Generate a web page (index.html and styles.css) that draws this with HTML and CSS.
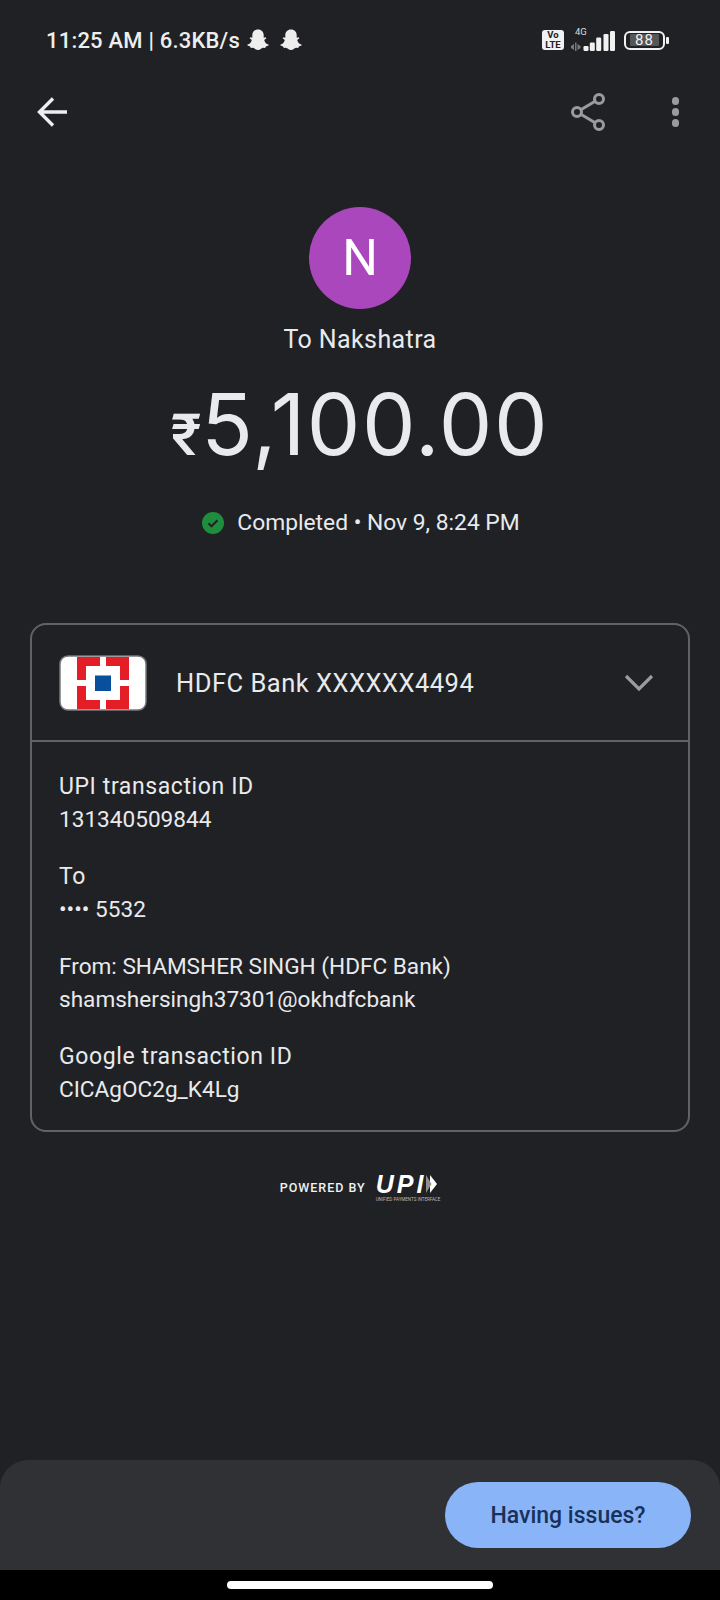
FILE: index.html
```html
<!DOCTYPE html>
<html lang="en">
<head>
<meta charset="UTF-8">
<meta name="viewport" content="width=device-width, initial-scale=1.0">
<title>Transaction details</title>
<link rel="stylesheet" href="styles.css">
</head>
<body>
<div id="page">
  <div class="status-bar">
    <div class="status-left">
      <span class="clock">11:25 AM | 6.3KB/s</span>
      <svg class="ghost" viewBox="0 0 24 24"><path d="M12 1.500c3.600 0 5.700 2.600 5.700 5.700v2.600l1.900-.5.8 1-2.200 1.600c.5 2.300 2 3.900 4.300 4.700v1l-2.700.8-.5 1.500-2.300-.1c-1.600.3-2.800 2.200-5 2.200s-3.400-1.900-5-2.200l-2.300.1-.5-1.500-2.700-.8v-1c2.300-.8 3.800-2.400 4.300-4.700L3.600 10.300l.8-1 1.900.5V7.200c0-3.100 2.100-5.700 5.700-5.700z"/></svg>
      <svg class="ghost second" viewBox="0 0 24 24"><path d="M12 1.500c3.600 0 5.700 2.600 5.700 5.700v2.600l1.900-.5.8 1-2.200 1.600c.5 2.300 2 3.900 4.300 4.700v1l-2.700.8-.5 1.500-2.300-.1c-1.600.3-2.800 2.200-5 2.200s-3.400-1.900-5-2.200l-2.300.1-.5-1.500-2.700-.8v-1c2.300-.8 3.800-2.400 4.300-4.700L3.600 10.300l.8-1 1.900.5V7.200c0-3.100 2.100-5.700 5.700-5.700z"/></svg>
    </div>
    <div class="status-right">
      <div class="volte">Vo<br>LTE</div>
      <div class="signal">
        <span class="net">4G</span>
        <svg width="46" height="22" viewBox="0 0 46 22">
          <path d="M0 17l3-2v6l-3-2zM4 13.500h1.500V22H4zM6.500 15l3 2v2l-3 2z" fill="#77797b"/>
          <rect x="12.500" y="17" width="5" height="5" rx="1.200" fill="#f1f1f1"/>
          <rect x="18.800" y="13.500" width="5" height="8.500" rx="1.200" fill="#f1f1f1"/>
          <rect x="25.200" y="8.500" width="5" height="13.500" rx="1.200" fill="#f1f1f1"/>
          <rect x="32.500" y="5" width="5" height="17" rx="1.200" fill="#f1f1f1"/>
          <rect x="39" y="2" width="5" height="20" rx="1.200" fill="#f1f1f1"/>
        </svg>
      </div>
      <div class="battery"><span class="level">88</span></div>
      <div class="battery-tip"></div>
    </div>
  </div>

  <div class="toolbar">
    <svg class="back" width="34" height="32" viewBox="0 0 34 32"><path d="M32 16H5M18 2.500L4.500 16 18 29.500" fill="none" stroke="#eceef0" stroke-width="3.400"/></svg>
    <div class="toolbar-actions">
      <svg width="36" height="40" viewBox="0 0 36 40"><path d="M28 7L6 20l22 13" fill="none" stroke="#9a9b9d" stroke-width="3"/><circle cx="28" cy="7" r="4.500" fill="#202124" stroke="#9a9b9d" stroke-width="3"/><circle cx="6" cy="20" r="4.500" fill="#202124" stroke="#9a9b9d" stroke-width="3"/><circle cx="28" cy="33" r="4.500" fill="#202124" stroke="#9a9b9d" stroke-width="3"/></svg>
      <div class="dots"><i></i><i></i><i></i></div>
    </div>
  </div>

  <div class="summary">
    <div class="avatar">N</div>
    <div class="payee">To Nakshatra</div>
    <div class="amount"><span class="rupee">₹</span>5,100.00</div>
    <div class="state">
      <svg width="22" height="22" viewBox="0 0 22 22"><circle cx="11" cy="11" r="11" fill="#1e8e3e"/><path d="M6.500 11.300l3 3 6-6" fill="none" stroke="#202124" stroke-width="2"/></svg>
      <span>Completed • Nov 9, 8:24 PM</span>
    </div>
  </div>

  <div class="card">
    <div class="card-head">
      <svg class="bank-logo" width="88" height="56" viewBox="0 0 88 56">
        <rect x="1" y="1" width="86" height="54" rx="8" fill="#fff" stroke="#77797b" stroke-width="1.500"/>
        <path d="M18 2h23v9H27v14h-9zM47 2h23v23h-9V11H47zM18 31h9v14h14v9H18zM61 31h9v23H47v-9h14z" fill="#e31e26"/>
        <rect x="36" y="20.500" width="16" height="15.500" fill="#084f9c"/>
      </svg>
      <div class="bank-name">HDFC Bank XXXXXX4494</div>
      <svg class="chevron" width="30" height="18" viewBox="0 0 30 18"><path d="M2 2l13 13L28 2" fill="none" stroke="#9a9b9d" stroke-width="3.200"/></svg>
    </div>
    <div class="card-body">
      <div class="detail"><div class="label">UPI transaction ID</div><div>131340509844</div></div>
      <div class="detail"><div class="label">To</div><div>•••• 5532</div></div>
      <div class="detail"><div>From: SHAMSHER SINGH (HDFC Bank)</div><div>shamshersingh37301@okhdfcbank</div></div>
      <div class="detail"><div class="label">Google transaction ID</div><div>CICAgOC2g_K4Lg</div></div>
    </div>
  </div>

  <div class="powered">
    <span class="powered-by">POWERED BY</span>
    <div class="upi">
      <div class="upi-mark">
        <span class="upi-word">UPI</span>
        <svg width="11" height="18" viewBox="0 0 11 18"><path d="M4 0l7 9-7 9z" fill="#fff"/><path d="M0 0l5.500 9L0 18z" fill="#8d8e90"/></svg>
      </div>
      <div class="upi-sub">UNIFIED PAYMENTS INTERFACE</div>
    </div>
  </div>

  <div class="sheet">
    <button class="issues">Having issues?</button>
  </div>
  <div class="nav-bar"><div class="home-pill"></div></div>
</div>
</body>
</html>
```

FILE: styles.css
```css
body {
  margin: 0;
  padding: 0;
  background-color: #202124;
  font-family: Roboto, "Liberation Sans", sans-serif;
  color: #e8eaed;
}
#page {
  width: 720px;
  height: 1600px;
  display: flex;
  flex-direction: column;
  overflow: hidden;
}

/* status bar */
.status-bar {
  height: 80px;
  padding: 0 51px 0 46px;
  display: flex;
  justify-content: space-between;
  align-items: center;
  box-sizing: border-box;
}
.status-left {
  display: flex;
  align-items: center;
}
.clock {
  font-size: 22px;
  font-weight: 500;
  letter-spacing: 0.2px;
  color: #eeeeee;
}
.ghost {
  width: 24px;
  height: 24px;
  margin-left: 6px;
  fill: #eeeeee;
}
.ghost.second {
  margin-left: 9px;
}
.status-right {
  display: flex;
  align-items: center;
}
.volte {
  width: 22px;
  height: 20px;
  background-color: #f1f1f1;
  color: #202124;
  border-radius: 3px;
  font-size: 9.500px;
  font-weight: 700;
  line-height: 9.500px;
  text-align: center;
}
.signal {
  margin-left: 7px;
  position: relative;
  height: 22px;
}
.net {
  position: absolute;
  left: 4px;
  top: -3px;
  font-size: 9.500px;
  color: #dddddd;
}
.battery {
  margin-left: 7px;
  width: 37px;
  height: 15px;
  border: 2.500px solid #f1f1f1;
  border-radius: 6px;
  display: flex;
  align-items: center;
  justify-content: center;
}
.level {
  width: 29px;
  height: 12px;
  background-color: #555658;
  border-radius: 1px;
  font-size: 15px;
  letter-spacing: 1px;
  line-height: 12px;
  text-align: center;
  color: #f1f1f1;
}
.battery-tip {
  width: 3px;
  height: 7px;
  margin-left: 1px;
  background-color: #f1f1f1;
  border-radius: 1px;
}

/* toolbar */
.toolbar {
  height: 64px;
  padding: 0 41px 0 35px;
  display: flex;
  justify-content: space-between;
  align-items: center;
}
.toolbar-actions {
  display: flex;
  align-items: center;
  gap: 65px;
}
.dots {
  display: flex;
  flex-direction: column;
  gap: 3.500px;
}
.dots i {
  width: 7.500px;
  height: 7.500px;
  border-radius: 50%;
  background-color: #9a9b9d;
}

/* payee and amount */
.summary {
  display: flex;
  flex-direction: column;
  align-items: center;
  padding-top: 63px;
}
.avatar {
  width: 102px;
  height: 102px;
  border-radius: 50%;
  background-color: #ab47bc;
  color: #fff;
  font-size: 50px;
  line-height: 102px;
  text-align: center;
}
.payee {
  margin-top: 15px;
  font-size: 25px;
  letter-spacing: 0.4px;
  line-height: 32px;
}
.amount {
  margin-top: 19px;
  font-family: Inter, Roboto, sans-serif;
  font-size: 85px;
  font-weight: 400;
  letter-spacing: 1.500px;
  line-height: 100px;
}
.rupee {
  font-family: Roboto, sans-serif;
  font-weight: 500;
  font-size: 58px;
  letter-spacing: 0;
}
.state {
  margin-top: 23px;
  padding-left: 2px;
  display: flex;
  align-items: center;
  gap: 13px;
  font-size: 22.800px;
  line-height: 30px;
}

/* bank card */
.card {
  margin: 85px 30px 0 30px;
  border: 2px solid #5f6368;
  border-radius: 16px;
}
.card-head {
  height: 115px;
  padding: 0 34px 0 27px;
  display: flex;
  align-items: center;
  border-bottom: 2px solid #5f6368;
}
.bank-name {
  margin-left: 29px;
  font-size: 25.500px;
  letter-spacing: 0.5px;
  flex: 1;
}
.card-body {
  padding: 28px 27px 24px 27px;
}
.detail {
  font-size: 22.600px;
  line-height: 33px;
  margin-bottom: 24px;
}
.detail:last-child {
  margin-bottom: 0;
}
.detail .label {
  font-size: 23px;
  letter-spacing: 0.6px;
}

/* upi footer */
.powered {
  margin-top: 42px;
  display: flex;
  justify-content: center;
  align-items: flex-start;
  gap: 10px;
}
.powered-by {
  font-size: 12.500px;
  font-weight: 500;
  letter-spacing: 1px;
  margin-top: 6px;
  color: #f1f1f1;
}
.upi-mark {
  display: flex;
  align-items: center;
  height: 20px;
}
.upi-word {
  font-family: "Liberation Sans", sans-serif;
  font-size: 25px;
  font-weight: 700;
  font-style: italic;
  line-height: 20px;
  color: #fff;
  letter-spacing: 3px;
}
.upi-sub {
  margin-top: 3px;
  font-size: 4.500px;
  line-height: 5px;
  color: #b9babb;
}

/* bottom sheet */
.sheet {
  margin-top: auto;
  height: 110px;
  padding: 0 29px;
  display: flex;
  justify-content: flex-end;
  align-items: center;
  background-color: #303134;
  border-radius: 28px 28px 0 0;
}
.issues {
  width: 246px;
  height: 66px;
  padding-top: 2px;
  border: none;
  border-radius: 33px;
  background-color: #8ab4f8;
  color: #17315a;
  font-family: Roboto, sans-serif;
  font-size: 23px;
  font-weight: 500;
}
.nav-bar {
  height: 30px;
  background-color: #000;
  display: flex;
  justify-content: center;
  padding-top: 11px;
  box-sizing: border-box;
}
.home-pill {
  width: 266px;
  height: 8px;
  border-radius: 4px;
  background-color: #fff;
}
```
